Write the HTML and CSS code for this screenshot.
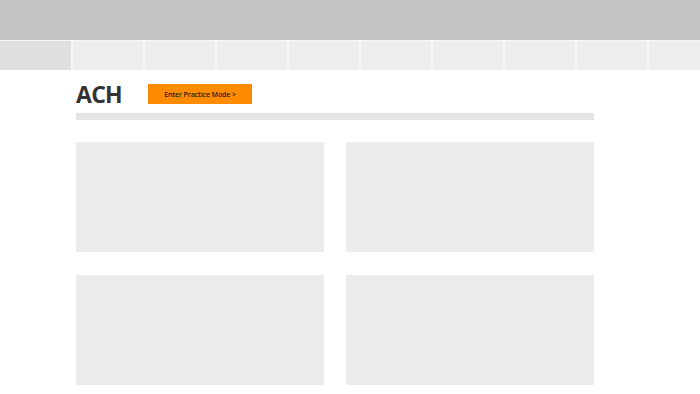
FILE: index.html
```html
<!DOCTYPE html>
<html lang="en">
<head>
  <meta charset="UTF-8">
  <title>ACH</title>
  <link rel="stylesheet" href="styles.css">
</head>
<body>

  <div class="topbar"></div>

  <div class="tabs">
    <div class="tab active"></div>
    <div class="tab"></div>
    <div class="tab"></div>
    <div class="tab"></div>
    <div class="tab"></div>
    <div class="tab"></div>
    <div class="tab"></div>
    <div class="tab"></div>
    <div class="tab"></div>
    <div class="tab"></div>
  </div>

  <div class="main">
    <div class="header">
      <h1>ACH</h1>
      <button class="practice">Enter Practice Mode &gt;</button>
    </div>
    <div class="progress"></div>

    <div class="cards">
      <div class="card"></div>
      <div class="card"></div>
      <div class="card"></div>
      <div class="card"></div>
    </div>
  </div>

</body>
</html>
```

FILE: styles.css
```css
body {
  margin: 0;
  font-family: "Open Sans", sans-serif;
  background-color: #fff;
  overflow: hidden;
}
.topbar {
  height: 40px;
  background-color: #c4c4c4;
}
.tabs {
  display: flex;
  gap: 2px;
  height: 30px;
  margin-left: -1px;
  background-color: #f7f7f7;
  overflow: hidden;
}
.tab {
  flex: 0 0 70px;
  height: 29px;
  margin-top: 1px;
  background-color: #eeeeee;
}
.tab.active {
  flex-basis: 72px;
  background-color: #dfdfdf;
}
.main {
  width: 518px;
  margin-left: 76px;
}
.header {
  display: flex;
  align-items: center;
  height: 20px;
  padding-top: 14px;
}
.header h1 {
  width: 72px;
  margin: 0;
  font-size: 23px;
  font-weight: 700;
  letter-spacing: -0.7px;
  line-height: 20px;
  color: #333;
}
.practice {
  width: 104px;
  height: 20px;
  border: none;
  padding: 0;
  background-color: #ff8c00;
  font-family: "Open Sans", sans-serif;
  font-size: 7px;
  font-weight: 600;
  letter-spacing: -0.1px;
  color: #222;
}
.progress {
  height: 7px;
  margin-top: 9px;
  background-color: #e5e5e5;
}
.cards {
  display: grid;
  grid-template-columns: 248px 248px;
  grid-auto-rows: 110px;
  column-gap: 22px;
  row-gap: 23px;
  margin-top: 22px;
}
.card {
  background-color: #ececec;
}
```
